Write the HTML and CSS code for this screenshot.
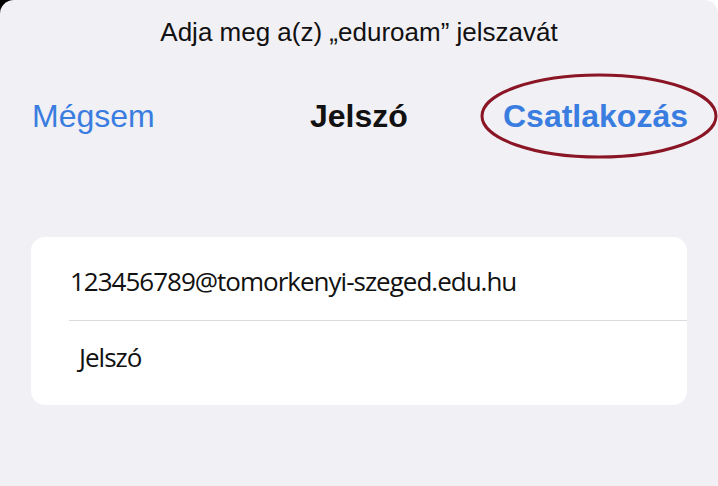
FILE: index.html
```html
<!DOCTYPE html>
<html lang="hu">
<head>
<meta charset="UTF-8" />
<meta name="viewport" content="width=device-width, initial-scale=1" />
<title>eduroam jelszó</title>
<link rel="stylesheet" href="styles.css">
</head>
<body>

<div class="sheet">
  <div class="prompt">Adja meg a(z) „eduroam” jelszavát</div>

  <div class="navbar">
    <a class="nav-btn cancel" href="#">Mégsem</a>
    <span class="nav-title">Jelszó</span>
    <a class="nav-btn join" href="#">Csatlakozás
      <svg class="circle" viewBox="0 0 240 86" aria-hidden="true">
        <ellipse cx="119" cy="43" rx="117" ry="41" fill="none" stroke="#8a1525" stroke-width="3" />
      </svg>
    </a>
  </div>

  <div class="form-card">
    <div class="field">123456789@tomorkenyi-szeged.edu.hu</div>
    <div class="field password">Jelszó</div>
  </div>
</div>

</body>
</html>
```

FILE: styles.css
```css
html, body { margin: 0; padding: 0; height: 100%; }
body { background: linear-gradient(to right, #000 50%, #fff 50%); font-family: "Liberation Sans", Arial, sans-serif; }
.sheet { background: #f1f0f5; height: 486px; border-radius: 14px 14px 0 0; overflow: hidden; }
.prompt { text-align: center; font-size: 26px; color: #111; padding-top: 17px; height: 33px; }
.navbar { display: flex; justify-content: space-between; align-items: center; padding: 0 30px 0 32px; margin-top: 46px; height: 40px; }
.nav-btn { color: #3a7de0; text-decoration: none; font-size: 32px; }
.nav-title { font-size: 32px; font-weight: bold; color: #111; margin-left: 60px; }
.join { font-weight: bold; font-size: 32px; position: relative; }
.circle { position: absolute; left: -23px; top: -25px; width: 240px; height: 86px; }
.form-card { background: #fff; margin: 101px 31px 0 31px; border-radius: 14px; }
.field { font-family: "Open Sans", sans-serif; font-size: 26px; color: #111; padding: 4px 0 0 39px; height: 79px; display: flex; align-items: center; letter-spacing: -1px; }
.field + .field { border-top: 1px solid #dcdce0; margin-left: 38px; padding: 0 0 12px 10px; height: 72px; }
```
